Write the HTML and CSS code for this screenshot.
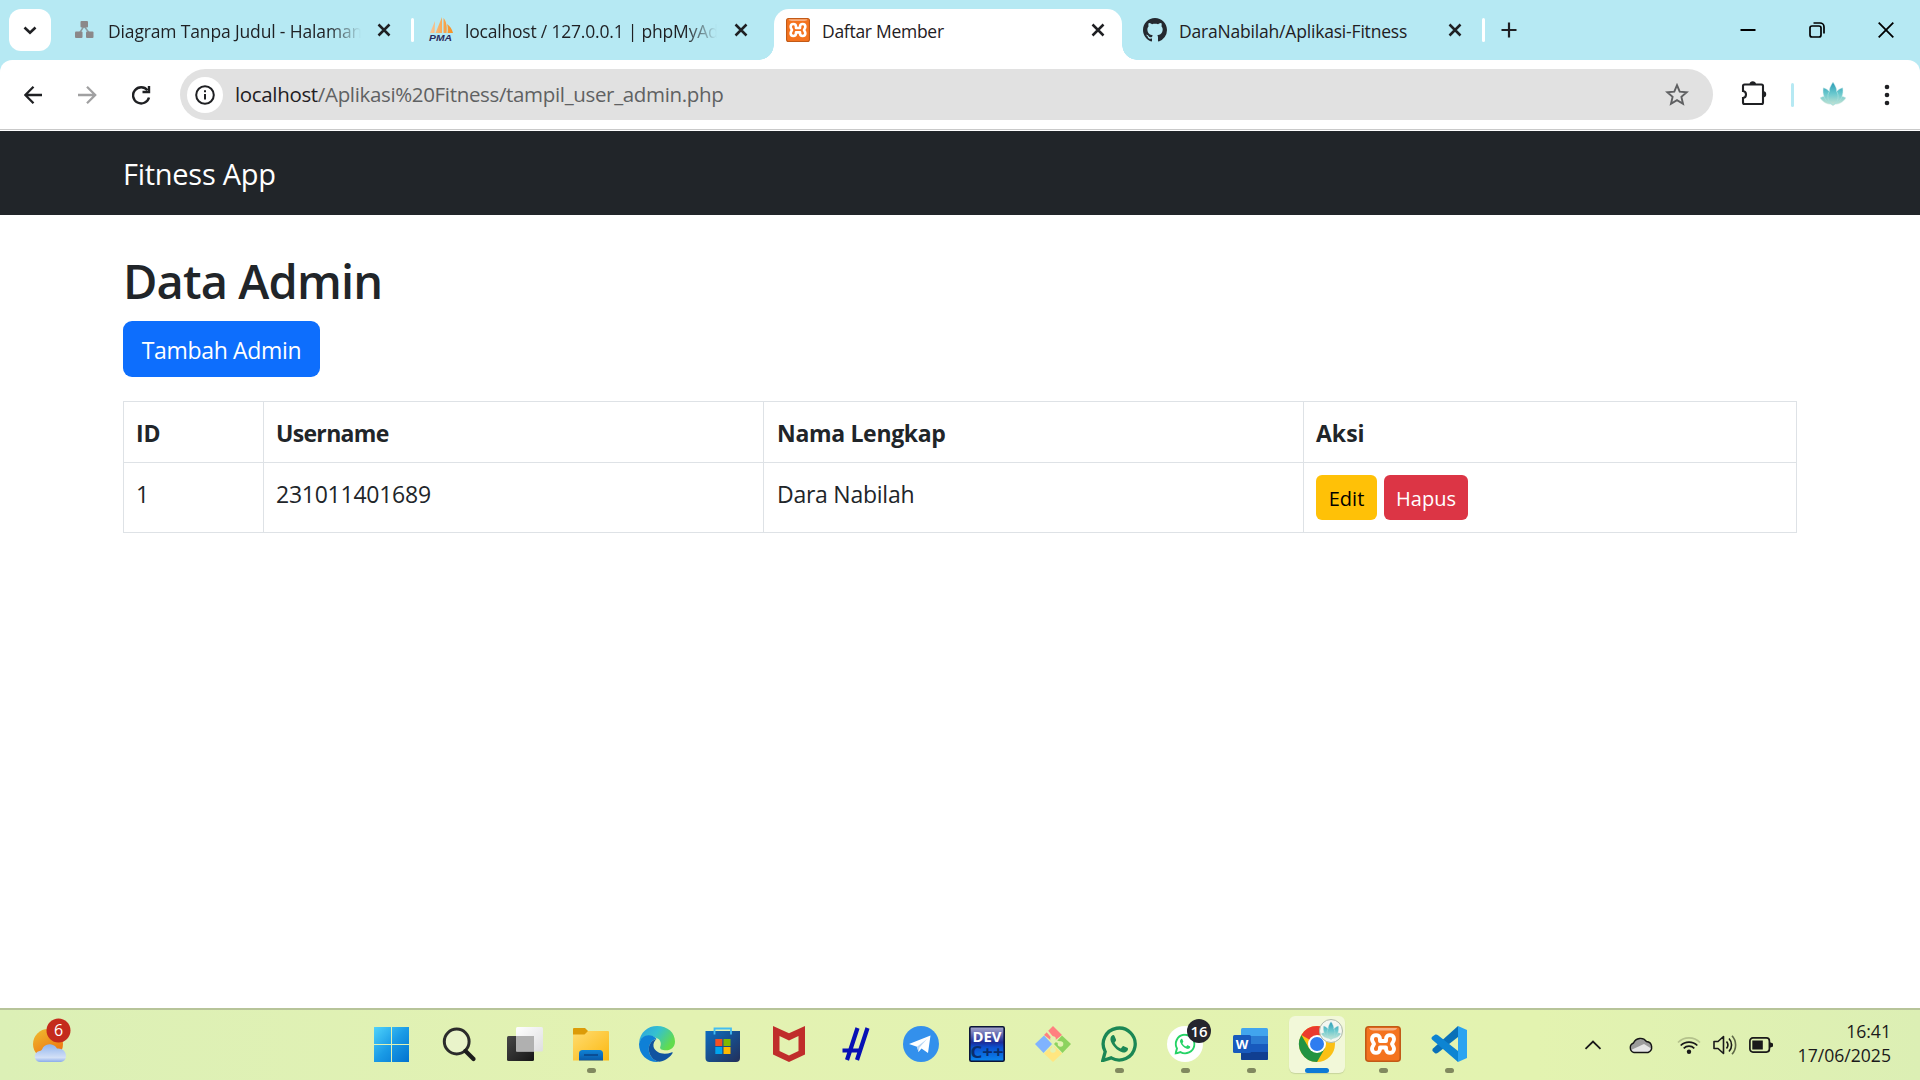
FILE: index.html
```html
<!DOCTYPE html>
<html lang="id">
<head>
<meta charset="utf-8">
<title>Daftar Member</title>
<link rel="stylesheet" href="styles.css">
</head>
<body>
<svg class="defs" width="0" height="0">
  <defs>
    <linearGradient id="gWin" x1="0" y1="0" x2="1" y2="1"><stop offset="0" stop-color="#4fd3fb"/><stop offset=".5" stop-color="#1a9be6"/><stop offset="1" stop-color="#0172cf"/></linearGradient>
    <linearGradient id="gLotus" x1="0" y1="0" x2="0" y2="1"><stop offset="0" stop-color="#2a9bb5"/><stop offset=".5" stop-color="#6bc9ce"/><stop offset="1" stop-color="#cfe5d3"/></linearGradient>
    <linearGradient id="gSun" x1="0" y1="0" x2=".6" y2="1"><stop offset="0" stop-color="#efbd30"/><stop offset="1" stop-color="#ee7210"/></linearGradient>
    <linearGradient id="gCloud" x1="0" y1="0" x2="0" y2="1"><stop offset="0" stop-color="#8fb4ee"/><stop offset=".75" stop-color="#d3e0f6"/><stop offset="1" stop-color="#89abeb"/></linearGradient>
    <linearGradient id="gFold" x1="0" y1="0" x2="1" y2="1"><stop offset="0" stop-color="#ffdc70"/><stop offset="1" stop-color="#fbb811"/></linearGradient>
    <linearGradient id="gBlue" x1="0" y1="0" x2="0" y2="1"><stop offset="0" stop-color="#0f83d6"/><stop offset="1" stop-color="#0a5aa9"/></linearGradient>
    <linearGradient id="gStore" x1="0" y1="0" x2="1" y2="1"><stop offset="0" stop-color="#0c6cc0"/><stop offset="1" stop-color="#232f58"/></linearGradient>
    <linearGradient id="gEdge" x1="0" y1="0" x2="1" y2=".5"><stop offset="0" stop-color="#2a9fe0"/><stop offset=".5" stop-color="#35c1d0"/><stop offset="1" stop-color="#62dc4c"/></linearGradient>
    <linearGradient id="gDev" x1="0" y1="0" x2="0" y2="1"><stop offset="0" stop-color="#a9a9cd"/><stop offset=".45" stop-color="#1c2c98"/><stop offset=".6" stop-color="#0a50d0"/><stop offset="1" stop-color="#0a86ee"/></linearGradient>
    <linearGradient id="gTvA" x1="0" y1="0" x2="1" y2="1"><stop offset="0" stop-color="#474747"/><stop offset="1" stop-color="#161616"/></linearGradient>
    <linearGradient id="gTvB" x1="0" y1="0" x2="1" y2="1"><stop offset="0" stop-color="#ffffff"/><stop offset="1" stop-color="#dedee0"/></linearGradient>
    <linearGradient id="gPma" x1="0" y1="0" x2="1" y2="0"><stop offset="0" stop-color="#f8c79a"/><stop offset="1" stop-color="#f7901e"/></linearGradient>
    <symbol id="lotus" viewBox="0 0 26 26">
      <path fill="url(#gLotus)" stroke="#dff0ee" stroke-width=".5" d="M13 0C10.500 4 9 6.500 9.300 9.500C7.500 7.500 5.500 6 3.200 5.800C2.800 9.500 2.900 12 4 14.500C2.700 14.500 1.200 15 0 16C3 20.500 7 22.500 11 22.300L13 24L15 22.300C19 22.500 23 20.500 26 16C24.800 15 23.300 14.500 22 14.500C23.100 12 23.200 9.500 22.800 5.800C20.500 6 18.500 7.500 16.700 9.500C17 6.500 15.500 4 13 0Z"/>
      <path d="M13 23C7 20 7 13 9.300 9.500M13 23C19 20 19 13 16.700 9.500M12 22C8 21 5 18 4 14.500M14 22C18 21 21 18 22 14.500" fill="none" stroke="#a5dedc" stroke-width=".8"/>
    </symbol>
    <symbol id="xampp" viewBox="0 0 36 36">
      <rect x=".8" y=".8" width="34.400" height="34.400" rx="3" fill="#f4731f" stroke="#c25a17" stroke-width="1.600"/>
      <path d="M4 2h28c-1 3-3 2.500-14 2.500S5 5 4 2Z" fill="#f7b184"/>
      <path d="M15 15H21V13C21 7.800 29 7.800 29 13C29 15.500 27.500 16.500 27 18C27.500 19.500 29 20.500 29 23C29 28.200 21 28.200 21 23V21.500H15V23C15 28.200 7 28.200 7 23C7 20.500 8.500 19.500 9 18C8.500 16.500 7 15.500 7 13C7 7.800 15 7.800 15 13Z" fill="none" stroke="#fff" stroke-width="3.900" stroke-linejoin="round"/>
    </symbol>
    <symbol id="close" viewBox="0 0 14 14"><path d="M1.500 1.500l11 11M12.500 1.500l-11 11" stroke="#1f2023" stroke-width="2.500"/></symbol>
    <symbol id="phone" viewBox="0 0 36 36">
      <path d="M1.800 34.500L4.200 25.800A16 16 0 1 1 10.200 31.900Z" fill="none" stroke="currentColor" stroke-width="3.300"/>
      <path d="M11.500 9.300C9.500 10.500 9 13 9.800 15.200C12 20.500 16 24.500 21.200 26.300C23.500 27 26 26 26.900 23.700C27.100 22.600 27 22.200 26.300 21.800L22.800 20.200C22 19.900 21.700 20.100 21.200 20.800L19.900 22.400C16.900 21.300 14.900 19.300 13.500 16.700L14.900 14.700C15.200 14.200 15.100 13.700 14.900 13.200L13.500 9.900C13.100 9 12.300 8.900 11.500 9.300Z" fill="currentColor"/>
    </symbol>
  </defs>
</svg>

<header class="tabstrip">
  <button class="tab-search"><svg width="14" height="9" viewBox="0 0 14 9"><path d="M1.500 1.500L7 6.800l5.500-5.300" fill="none" stroke="#1f2023" stroke-width="2.600"/></svg></button>
  <div class="tab tab-one">
    <svg width="20" height="18" viewBox="0 0 20 18"><path d="M9 5L4 13M9 5l6 8" stroke="#8d9ba0" stroke-width="1.500"/><g fill="#8b8889"><rect x="5.500" y="0" width="7.500" height="6.500" rx="1"/><rect x="0" y="10.500" width="7.500" height="6.500" rx="1"/><rect x="11" y="10.500" width="7.500" height="6.500" rx="1"/></g></svg>
    <span class="tab-title fade">Diagram Tanpa Judul - Halaman</span>
    <svg class="x" width="14" height="14"><use href="#close"/></svg>
  </div>
  <i class="tab-sep"></i>
  <div class="tab tab-two">
    <svg width="26" height="26" viewBox="0 0 26 26"><path d="M2 16L7 4L6.500 16ZM7.500 16L14 0V16ZM15.500 16V1C19 5 19 11 18.500 16ZM19.500 16c.5-3 .5-6-.5-9c3 2 5 5 6 9Z" fill="url(#gPma)"/><text x="1" y="24" class="pma" textLength="23" lengthAdjust="spacingAndGlyphs">PMA</text></svg>
    <span class="tab-title fade">localhost / 127.0.0.1 | phpMyAd</span>
    <svg class="x" width="14" height="14"><use href="#close"/></svg>
  </div>
  <div class="tab tab-active">
    <svg width="24" height="24"><use href="#xampp"/></svg>
    <span class="tab-title">Daftar Member</span>
    <svg class="x" width="14" height="14"><use href="#close"/></svg>
  </div>
  <div class="tab tab-four">
    <svg width="24" height="24" viewBox="0 0 16 16"><path fill="#24292f" d="M8 0C3.580 0 0 3.580 0 8c0 3.540 2.290 6.530 5.470 7.590.4.070.55-.17.55-.38 0-.19-.01-.82-.01-1.490-2.010.37-2.530-.49-2.690-.94-.09-.23-.48-.94-.82-1.130-.28-.15-.68-.52-.01-.53.63-.01 1.080.58 1.230.82.72 1.210 1.870.87 2.330.66.07-.52.28-.87.51-1.070-1.780-.2-3.640-.89-3.640-3.950 0-.87.31-1.590.82-2.150-.08-.2-.36-1.020.08-2.120 0 0 .67-.21 2.200.82.64-.18 1.320-.27 2-.27s1.360.09 2 .27c1.530-1.040 2.200-.82 2.200-.82.44 1.100.16 1.920.08 2.120.51.56.82 1.270.82 2.150 0 3.070-1.870 3.750-3.650 3.950.29.25.54.73.54 1.480 0 1.070-.01 1.930-.01 2.200 0 .21.15.46.55.38A8.010 8.010 0 0 0 16 8c0-4.420-3.580-8-8-8Z"/></svg>
    <span class="tab-title">DaraNabilah/Aplikasi-Fitness</span>
    <svg class="x" width="14" height="14"><use href="#close"/></svg>
  </div>
  <i class="tab-sep"></i>
  <svg class="new-tab" width="16" height="16" viewBox="0 0 16 16"><path d="M8 .5v15M.5 8h15" stroke="#1f2023" stroke-width="2.200"/></svg>
  <div class="win-controls">
    <svg width="16" height="16" viewBox="0 0 16 16"><path d="M.5 8h15" stroke="#000" stroke-width="2"/></svg>
    <svg width="16" height="16" viewBox="0 0 16 16"><g fill="none" stroke="#000" stroke-width="1.700"><rect x="1" y="4" width="11" height="11" rx="2"/><path d="M4.500 1h6.500a4 4 0 0 1 4 4v6.500"/></g></svg>
    <svg width="16" height="16" viewBox="0 0 16 16"><path d="M.7.700l14.600 14.600M15.300.700L.7 15.300" stroke="#000" stroke-width="1.800"/></svg>
  </div>
</header>

<div class="toolbar-bg">
<div class="toolbar">
  <div class="nav-icons">
    <svg width="20" height="20" viewBox="0 0 20 20"><path d="M18 10H1.500M9.500 1.800L1.300 10l8.200 8.200" fill="none" stroke="#1f2023" stroke-width="2.300"/></svg>
    <svg width="20" height="20" viewBox="0 0 20 20"><path d="M0 10h17M9 1.800L17.200 10 9 18.200" fill="none" stroke="#a0a0a1" stroke-width="2.300"/></svg>
    <svg width="20" height="20" viewBox="0 0 20 20"><path d="M15.500 5.200A8.100 8.100 0 1 0 17 12.500" fill="none" stroke="#1f2023" stroke-width="2.400"/><path d="M17 1V7H10.500" fill="none" stroke="#1f2023" stroke-width="2.400"/></svg>
  </div>
  <div class="omnibox">
    <span class="info"><svg width="20" height="20" viewBox="0 0 20 20"><circle cx="10" cy="10" r="8.800" fill="none" stroke="#1f2023" stroke-width="2"/><path d="M10 9v5.500M10 5.300v2" stroke="#1f2023" stroke-width="2"/></svg></span>
    <span class="url"><b>localhost</b>/Aplikasi%20Fitness/tampil_user_admin.php</span>
    <svg class="star" width="24" height="24" viewBox="0 0 24 24"><path d="M12 2.200l2.700 6.500 7 .6-5.300 4.600 1.600 6.900L12 17.100l-6 3.700 1.600-6.900L2.300 9.300l7-.6Z" fill="none" stroke="#5f6062" stroke-width="1.900"/></svg>
  </div>
  <svg class="ext" width="26" height="26" viewBox="0 0 26 26"><path d="M3.500 3.500H20.500a1.500 1.500 0 0 1 1.500 1.500V21.500a1.500 1.500 0 0 1-1.500 1.500H3.500A1.500 1.500 0 0 1 2 21.500v-4.500c4-.5 4-6.500 0-7V5A1.500 1.500 0 0 1 3.500 3.500Z" fill="none" stroke="#1f2023" stroke-width="2.100"/><path d="M8.500 3a3.300 3.300 0 0 1 6.500 0ZM22.500 10a3.300 3.300 0 0 1 0 6.500Z" fill="#1f2023"/></svg>
  <i class="tool-sep"></i>
  <svg class="profile" width="26" height="26"><use href="#lotus"/></svg>
  <svg class="menu" width="6" height="22" viewBox="0 0 6 22"><g fill="#1f2023"><circle cx="3" cy="3" r="2.300"/><circle cx="3" cy="11" r="2.300"/><circle cx="3" cy="19" r="2.300"/></g></svg>
</div>
</div>

<nav class="navbar"><a class="brand">Fitness App</a></nav>
<main class="container">
  <h1>Data Admin</h1>
  <a class="btn-primary">Tambah Admin</a>
  <table>
    <colgroup><col class="c-id"><col class="c-user"><col class="c-name"><col></colgroup>
    <thead><tr><th>ID</th><th class="tight">Username</th><th class="name">Nama Lengkap</th><th>Aksi</th></tr></thead>
    <tbody><tr><td>1</td><td>231011401689</td><td class="name">Dara Nabilah</td><td><div class="actions"><a class="btn-sm warn">Edit</a><a class="btn-sm danger">Hapus</a></div></td></tr></tbody>
  </table>
</main>

<footer class="taskbar">
  <div class="weather"><svg width="44" height="50" viewBox="0 0 44 50">
    <circle cx="20" cy="28" r="15" fill="url(#gSun)"/>
    <path d="M13 46a5.500 5.500 0 0 1-1.500-11C13.500 35 14 33.500 15 31.500a8.500 8.500 0 0 1 14 1C34 32 38 35 38 40a6 6 0 0 1-5 6Z" fill="url(#gCloud)"/>
    <circle cx="30.500" cy="14.500" r="12" fill="#c42b1c"/><text x="30.500" y="20" class="badge6">6</text></svg></div>
  <div class="apps">
    <span class="app"><svg viewBox="0 0 36 36"><path d="M-1 1h17v17h-17zM17 1h17v17h-17zM-1 19h17v17h-17zM17 19h17v17h-17z" fill="url(#gWin)"/></svg></span>
    <span class="app"><svg viewBox="0 0 36 36"><circle cx="15.700" cy="15.500" r="12.400" fill="#eef5d8" fill-opacity=".6" stroke="#2b2b2b" stroke-width="3"/><path d="M24.500 25l8 8" stroke="#1c1c1c" stroke-width="4.200" stroke-linecap="round"/></svg></span>
    <span class="app"><svg viewBox="0 0 36 36"><rect x="0" y="10" width="27" height="25" rx="1.500" fill="url(#gTvA)"/><rect x="9" y="1" width="27" height="24.500" rx="1.500" fill="url(#gTvB)"/><rect x="9" y="10" width="18" height="15.500" fill="#b0b0b0"/></svg></span>
    <span class="app run"><svg viewBox="0 0 36 36"><path d="M0 3a1 1 0 0 1 1-1h11l3 3v5H0Z" fill="#dc9b08"/><path d="M0 8.500h11.500L15 5h20a1 1 0 0 1 1 1v28.500H0Z" fill="url(#gFold)"/><path d="M6 34.500v-7a3.500 3.500 0 0 1 3.500-3.500h17a3.500 3.500 0 0 1 3.500 3.500v7Z" fill="url(#gBlue)"/><path d="M11 29h14" stroke="#0a4386" stroke-width="1.500"/></svg></span>
    <span class="app"><svg viewBox="0 0 36 36"><path d="M0 17C1 6 9 0 18 0C29 0 36 7 36 15.500C36 21 32 24.300 27 24.300C23 24.300 20.500 23 21.200 21C22.500 18 22 13.500 17.500 12C12 8.500 4 9 0 17Z" fill="url(#gEdge)"/><path d="M0 18C2 8 12 7 17.500 12.500C13.500 14 10 17.500 9.800 23C9.800 29 13.500 34 20 36C9 37 0 29 0 18Z" fill="#0f80d6"/><path d="M17.500 13C13 14 9.800 18 9.800 23C9.800 29 14 35 20.500 35.800C27 34.500 31.500 31 33.800 26.800C33.800 26 33 26 32.400 26.400C25 29.500 16 27 14.500 20.500C14 17.500 15.500 14.500 17.500 13Z" fill="#1053a0"/></svg></span>
    <span class="app"><svg viewBox="0 0 36 36"><path d="M.5 5h34.500v27a4 4 0 0 1-4 4h-26.500a4 4 0 0 1-4-4Z" fill="url(#gStore)"/><path d="M9.500 8.500V2.500h16.500v6" fill="none" stroke="#43bdf2" stroke-width="1.800"/><path d="M10.300 13h7v7h-7z" fill="#f25022"/><path d="M18.500 13h7v7h-7z" fill="#7fba00"/><path d="M10.300 21h7v7h-7z" fill="#00a4ef"/><path d="M18.500 21h7v7h-7z" fill="#ffb900"/></svg></span>
    <span class="app"><svg viewBox="0 0 36 36"><path d="M2 0l16 7.300L34 0v28.500L18 36 2 28.500ZM8.500 10v15L18 29.500l9.500-4.500V10L18 14.500Z" fill="#c02d2b" fill-rule="evenodd"/></svg></span>
    <span class="app"><svg viewBox="0 0 36 36"><path d="M20.500 2L10 34M30.500 2L20 34M5.500 24.500h18" stroke="#0711b5" stroke-width="4.200" fill="none"/></svg></span>
    <span class="app"><svg viewBox="0 0 36 36"><circle cx="18" cy="18" r="18" fill="#3390ec"/><path d="M6 18L27.500 9.500L25 27L18.500 22.500L15.500 26L14 20.800Z" fill="#fff"/><path d="M14 20.800L24 13L16.500 21.500L15.500 26Z" fill="#b8d5f3"/></svg></span>
    <span class="app"><svg viewBox="0 0 36 36"><rect x=".8" y=".8" width="34.400" height="34.400" rx="1.500" fill="url(#gDev)" stroke="#0b1538" stroke-width="1.600"/><text x="3.500" y="16.300" class="dev" textLength="29" lengthAdjust="spacingAndGlyphs">DEV</text><text x="1.500" y="32" class="cpp" textLength="33" lengthAdjust="spacingAndGlyphs">C++</text></svg></span>
    <span class="app"><svg viewBox="0 0 36 36"><path d="M18 0L27 9L18 16L9 9Z" fill="#ff8080"/><path d="M9 9.500L17 18L8.500 27L0 18Z" fill="#80b3ff"/><path d="M27 9.500L36 18L27.500 27L19 18Z" fill="#8dd35f"/><path d="M18 19L27 27.500L18 36L9 27.500Z" fill="#ffe680"/><path d="M12 5L18 12V26M18 14L26 17" stroke="#e3f2b2" stroke-width="2" fill="none"/><g fill="#e3f2b2"><circle cx="18" cy="13" r="2.800"/><circle cx="18" cy="24" r="2.800"/><circle cx="25.500" cy="18" r="2.800"/></g></svg></span>
    <span class="app run wa"><svg viewBox="0 0 36 36"><use href="#phone" width="36" height="36"/></svg></span>
    <span class="app run wa2"><svg viewBox="0 0 36 36"><circle cx="18" cy="18" r="18" fill="#fff"/><use href="#phone" x="7.500" y="7.500" width="21" height="21"/></svg><b class="count">16</b></span>
    <span class="app run"><svg viewBox="0 0 36 36"><rect x="8" y="2" width="27" height="32" rx="1.500" fill="#41a5ee"/><path d="M8 10h27v8H8z" fill="#2b7cd3"/><path d="M8 18h27v8H8z" fill="#185abd"/><path d="M8 26h27v7a1 1 0 0 1-1 1H9a1 1 0 0 1-1-1Z" fill="#103f91"/><rect x="0" y="9" width="18" height="18" rx="1.500" fill="#185abd"/><text x="9" y="23" class="word">W</text></svg></span>
    <span class="app current"><svg viewBox="0 0 36 36"><circle cx="18" cy="18" r="18" fill="#fbc015"/><path d="M18 18L2.400 9A18 18 0 0 1 33.600 9H18Z" fill="#ea3a2e"/><path d="M2.400 9A18 18 0 0 0 18 36L25.800 22.500L10.200 22.500Z" fill="#229342"/><circle cx="18" cy="18" r="9" fill="#fff"/><circle cx="18" cy="18" r="7" fill="#2f7df0"/></svg><svg class="avatar" viewBox="0 0 24 24"><circle cx="12" cy="12" r="11.500" fill="#f4f7f1" stroke="#aeb8a8"/><use href="#lotus" x="2" y="2.500" width="20" height="20"/></svg></span>
    <span class="app run"><svg viewBox="0 0 36 36"><use href="#xampp" width="36" height="36"/></svg></span>
    <span class="app run"><svg viewBox="0 0 36 36"><path d="M27 0L36 4V32L27 36Z" fill="#2aa3f1"/><path d="M27 0L2 22.500A2.500 2.500 0 0 0 1.500 25L4 27.200C5 27.800 6 27.500 7 26.800L27 11Z" fill="#0a70b8"/><path d="M27 36L1 13.500C.3 12.500.3 11.500 1.200 10.700L4 8.800C5 8.300 6 8.500 7 9.300L27 25Z" fill="#0d84d2"/></svg></span>
  </div>
  <div class="tray">
    <svg class="chev" width="18" height="10" viewBox="0 0 18 10"><path d="M1.500 8.800L9 1.500l7.500 7.300" fill="none" stroke="#1a1a1a" stroke-width="1.800"/></svg>
    <svg class="cloud" width="26" height="18" viewBox="0 0 26 18"><path d="M6 16.500A5 5 0 0 1 5.500 7A7.500 7.500 0 0 1 18.500 5.500A5.700 5.700 0 0 1 20 16.500Z" fill="#9c9c9c"/><path d="M3 14L16 8L24 13L20 16.500H6Z" fill="#e5e5e5"/><path d="M6 16.500A5 5 0 0 1 5.500 7A7.500 7.500 0 0 1 18.500 5.500A5.700 5.700 0 0 1 20 16.500Z" fill="none" stroke="#151515" stroke-width="1.400"/></svg>
    <svg class="wifi" width="24" height="18" viewBox="0 0 24 18"><g fill="none" stroke="#1a1a1a" stroke-width="1.700"><path d="M1 6.500a15.500 15.500 0 0 1 22 0" stroke="#b4c28c"/><path d="M3.700 9.500a11.700 11.700 0 0 1 16.600 0M6.700 12.300a7.500 7.500 0 0 1 10.600 0"/></g><circle cx="12" cy="15.700" r="2.200" fill="#1a1a1a"/></svg>
    <svg class="vol" width="24" height="20" viewBox="0 0 24 20"><g fill="none" stroke="#1a1a1a" stroke-width="1.600"><path d="M1 6.500h4L10.500 1.500v17L5 13.500H1Z" stroke-linejoin="round"/><path d="M13.500 6.500a5.500 5.500 0 0 1 0 7M16 3.500a9.500 9.500 0 0 1 0 13"/><path d="M19 .8a13.500 13.500 0 0 1 0 18.400" stroke="#5d6746"/></g></svg>
    <svg class="bat" width="24" height="16" viewBox="0 0 24 16"><rect x=".9" y=".9" width="19.500" height="14.200" rx="3" fill="none" stroke="#1a1a1a" stroke-width="1.700"/><rect x="3.300" y="3.500" width="10.500" height="9" fill="#1a1a1a"/><path d="M21 5.200l3 1.200v3.200l-3 1.200Z" fill="#1a1a1a"/></svg>
    <div class="clock"><span>16:41</span><span>17/06/2025</span></div>
  </div>
</footer>
</body>
</html>
```
FILE: styles.css
```css
* { box-sizing: border-box; }
body {
  margin: 0;
  height: 1080px;
  display: flex;
  flex-direction: column;
  overflow: hidden;
  background: #fff;
  color: #212529;
  font-family: "Open Sans", "Noto Sans", sans-serif;
}
svg { display: block; flex: none; }
.defs { position: absolute; }

/* tab strip */
.tabstrip {
  height: 60px;
  flex: none;
  display: flex;
  align-items: center;
  background: #b6e9f3;
}
.tab-search {
  width: 42px; height: 42px;
  margin: 0 0 0 9px;
  padding: 0;
  border: 0;
  border-radius: 12px;
  background: #fff;
  display: grid;
  place-items: center;
}
.tab { display: flex; align-items: center; height: 60px; font-size: 17.5px; color: #1f2023; }
.tab-title { flex: 1; min-width: 0; white-space: nowrap; overflow: hidden; line-height: 26px; padding-top: 2px; }
.fade { -webkit-mask-image: linear-gradient(90deg, #000 calc(100% - 32px), transparent); mask-image: linear-gradient(90deg, #000 calc(100% - 32px), transparent); }
.tab-one { width: 360px; padding: 0 20px 0 24px; }
.tab-one .tab-title { margin: 0 16px 0 13px; letter-spacing: -.15px; }
.tab-two { width: 360px; padding: 0 26px 0 14px; }
.tab-two .tab-title { margin: 0 17px 0 11px; letter-spacing: -.2px; }
.tab-active {
  width: 348px;
  height: 51px;
  margin-top: 9px;
  padding: 0 17px 9px 12px;
  background: #fff;
  border-radius: 15px 15px 0 0;
  position: relative;
}
.tab-active::before, .tab-active::after {
  content: "";
  position: absolute;
  bottom: 0;
  width: 15px; height: 15px;
}
.tab-active::before { left: -15px; background: radial-gradient(circle at 0 0, transparent 14.5px, #fff 15px); }
.tab-active::after { right: -15px; background: radial-gradient(circle at 100% 0, transparent 14.5px, #fff 15px); }
.tab-active .tab-title { margin-left: 12px; letter-spacing: -.28px; }
.tab-four .tab-title { margin-left: 12px; letter-spacing: -.19px; }
.tab-four { width: 360px; padding: 0 20px 0 21px; }
.tab-sep { width: 3px; height: 24px; border-radius: 2px; background: #fff; flex: none; }
.new-tab { margin-left: 16px; }
.pma { font: italic 900 9.500px "Liberation Sans", sans-serif; fill: #2b2c5c; }
.win-controls { margin-left: auto; margin-top: -1px; padding-right: 26px; display: flex; gap: 53px; }

/* toolbar */
.toolbar-bg { background: #b6e9f3; flex: none; }
.toolbar {
  height: 71px;
  padding-bottom: 2px;
  display: flex;
  align-items: center;
  background: linear-gradient(#c9c9c9, #c9c9c9) 0 69px / 100% 1px no-repeat #fff;
  border-radius: 12px 12px 0 0;
}
.nav-icons { width: 180px; padding-left: 24px; display: flex; gap: 34px; }
.omnibox {
  width: 1533px; height: 51px;
  padding: 0 24px 0 7px;
  display: flex;
  align-items: center;
  border-radius: 26px;
  background: #e1e1e1;
}
.info { width: 36px; height: 36px; border-radius: 50%; background: #fff; display: grid; place-items: center; }
.url { margin-left: 12px; padding-bottom: 2px; font-size: 20.5px; letter-spacing: -.34px; color: #5f6163; white-space: nowrap; }
.url b { font-weight: 400; color: #1f2023; }
.star { margin-left: auto; }
.ext { margin-left: 28px; margin-top: -1px; }
.tool-sep { width: 3px; height: 24px; margin-left: 24px; border-radius: 2px; background: #b6e9f3; }
.profile { margin-left: 26px; }
.menu { margin-left: 38px; }

/* page */
.navbar { height: 84px; flex: none; padding: 1px 123px 0; display: flex; align-items: center; background: #212529; }
.brand { color: #fff; font-size: 29px; line-height: 45px; letter-spacing: -.27px; }
.container { flex: 1; padding: 37px 123px 0; }
h1 { margin: 0 0 11px; font-size: 47px; font-weight: 600; line-height: 58px; letter-spacing: -.88px; }
.btn-primary {
  width: 197px; height: 56px;
  padding-top: 2px;
  display: flex;
  align-items: center;
  justify-content: center;
  border-radius: 9px;
  background: #0d6efd;
  color: #fff;
  font-size: 23px;
  letter-spacing: -.33px;
}
table { width: 1674px; margin-top: 24px; table-layout: fixed; border-collapse: collapse; font-size: 23px; line-height: 36px; }
.c-id { width: 140px; }
.c-user { width: 500px; }
.c-name { width: 540px; }
th, td { border: 1px solid #dee2e6; padding: 13px 12px 11px; text-align: left; vertical-align: top; height: 61px; }
td { height: 70px; letter-spacing: -.25px; }
.tight { letter-spacing: -.68px; }
.name { padding-left: 13px; }
th.name { letter-spacing: -.32px; }
.actions { display: flex; gap: 7px; height: 45px; margin-top: -1px; letter-spacing: 0; }
.btn-sm { height: 45px; padding-top: 3px; display: flex; align-items: center; justify-content: center; border-radius: 6px; font-size: 20px; }
.warn { width: 61px; background: #ffc107; color: #000; }
.danger { width: 84px; background: #dc3545; color: #fff; }

/* taskbar */
.taskbar {
  height: 72px;
  flex: none;
  display: grid;
  grid-template-columns: 360px auto 1fr;
  border-top: 2px solid #b7c499;
  background: linear-gradient(90deg, #dcf0b6, #e3f2b2 35%, #e3f3b0 80%, #dcefb4);
}
.weather { padding: 6px 0 0 28px; }
.badge6 { font-size: 16px; fill: #fff; text-anchor: middle; }
.apps { display: flex; }
.app { width: 66px; height: 70px; padding: 16px 15px 0; position: relative; }
.app > svg { width: 36px; height: 36px; overflow: visible; }
.run::after, .current::after {
  content: "";
  position: absolute;
  left: 29px; top: 58px;
  width: 9px; height: 5px;
  border-radius: 3px;
  background: #81895f;
}
.current::before {
  content: "";
  position: absolute;
  left: 5px; top: 6px;
  width: 56px; height: 57px;
  border-radius: 6px;
  background: #f2f8d9;
  box-shadow: 0 1px 1px #c7d59d;
}
.current > svg { position: relative; }
.current::after { left: 21px; width: 24px; background: #0d7ad6; }
.current > .avatar { position: absolute; left: 35px; top: 9px; width: 24px; height: 24px; }
.wa { color: #1b8755; }
.wa2 { color: #25d366; }
.count {
  position: absolute;
  left: 35px; top: 9px;
  width: 24px; height: 24px;
  border-radius: 12px;
  background: #25262e;
  color: #fff;
  font-size: 15px;
  font-weight: 600;
  line-height: 24px;
  text-align: center;
}
.dev { font: bold 15px/1 "Open Sans", sans-serif; fill: #fff; }
.cpp { font: bold 16px/1 "Open Sans", sans-serif; fill: #0a2d6c; }
.word { font: bold 13px "Open Sans", sans-serif; fill: #fff; text-anchor: middle; }
.tray { display: flex; align-items: center; padding-right: 29px; justify-content: flex-end; color: #1a1a1a; }
.cloud { margin-left: 26px; }
.wifi { margin-left: 23px; }
.vol { margin-left: 12px; }
.bat { margin-left: 12px; }
.clock { width: 118px; margin-top: -4px; display: flex; flex-direction: column; align-items: flex-end; font-size: 17.6px; line-height: 24px; }
```
